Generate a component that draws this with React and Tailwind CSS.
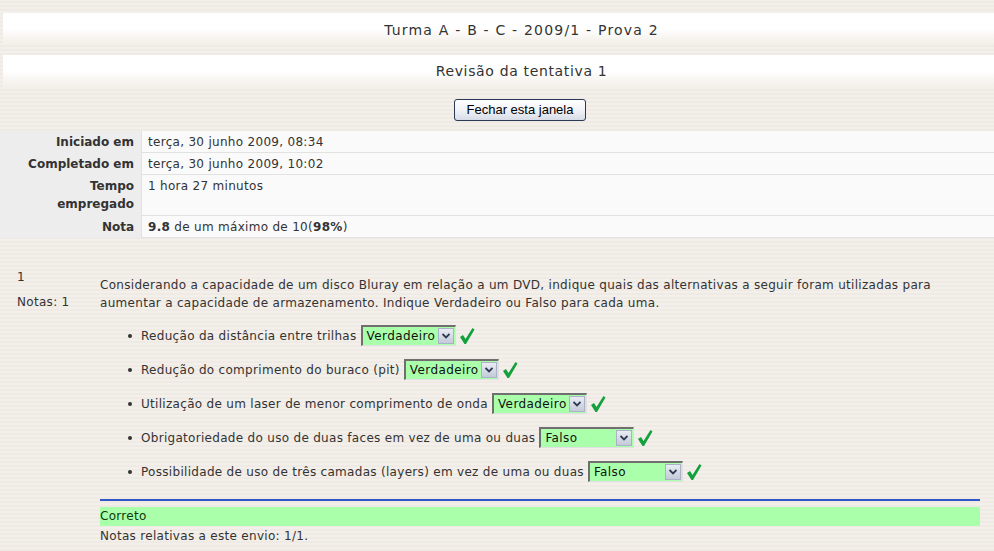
import React from "react";

const font = { fontFamily: '"DejaVu Sans", Verdana, sans-serif' };

const items = [
  { text: "Redução da distância entre trilhas", value: "Verdadeiro" },
  { text: "Redução do comprimento do buraco (pit)", value: "Verdadeiro" },
  { text: "Utilização de um laser de menor comprimento de onda", value: "Verdadeiro" },
  { text: "Obrigatoriedade do uso de duas faces em vez de uma ou duas", value: "Falso" },
  { text: "Possibilidade de uso de três camadas (layers) em vez de uma ou duas", value: "Falso" },
];

const Check = () => (
  <svg width="16" height="18" viewBox="0 0 16 18" className="ml-[3px]">
    <path d="M1 10 L4 8 L6.5 12 L13.5 1 L15.5 2.5 L7 17 L5.5 17 Z" fill="#14a03c" />
  </svg>
);

const FakeSelect = ({ value }) => (
  <div className="flex h-[21px] w-[95px] items-center justify-between border-t-2 border-l-2 border-t-[#6f6f6f] border-l-[#6f6f6f] border-r border-b border-r-[#e0e0e0] border-b-[#e0e0e0] bg-[#aaffaa] pl-[4px] pr-[1px]">
    <span className="text-[12px] leading-none tracking-[0.4px] text-[#111]">{value}</span>
    <span className="flex h-[16px] w-[16px] items-center justify-center border border-[#a9b2c6] bg-gradient-to-b from-[#e9ecf3] to-[#c4cad8]">
      <svg width="8" height="6" viewBox="0 0 8 6">
        <path d="M0.5 1 L4 4.5 L7.5 1" stroke="#2d3950" strokeWidth="1.8" fill="none" />
      </svg>
    </span>
  </div>
);

const Row = ({ label, children, tall }) => (
  <div className="contents">
    <div className={`flex justify-end bg-[#ededed] pt-[2px] pr-[7px] text-right font-bold leading-[18px] tracking-normal text-[#333] ${tall ? "pb-[3px]" : "pb-[1px]"}`}>
      <span className={tall ? "w-[80px]" : ""}>{label}</span>
    </div>
    <div className="border-b border-l border-[#e2e2e2] bg-[#fafafa] px-[6px] pt-[2px] pb-[1px] leading-[18px] text-[#333]">
      {children}
    </div>
  </div>
);

export default function App() {
  return (
    <div
      className="min-h-[551px] w-full overflow-hidden bg-[repeating-linear-gradient(0deg,#efeae4_0px,#efeae4_2px,#f3efea_2px,#f3efea_4px)] pt-[13px] text-[12px] tracking-[0.3px] text-[#333]"
      style={font}
    >
      <div className="w-[1040px]">
        <div className="ml-[3px] flex h-[31px] items-center justify-center bg-gradient-to-b from-white via-white to-[#f3efe9] pt-[3px] text-[14px] tracking-[1.2px] text-[#333]">
          Turma A - B - C - 2009/1 - Prova 2
        </div>
        <div className="ml-[3px] mt-[11px] flex h-[32px] items-center justify-center bg-gradient-to-b from-white via-white to-[#f3efe9] text-[14px] tracking-[0.65px] text-[#333]">
          Revisão da tentativa 1
        </div>
        <div className="mt-[12px] flex justify-center">
          <button
            className="h-[22px] w-[132px] rounded-[3px] border border-[#2a3a55] bg-gradient-to-b from-white via-[#f2f3f7] to-[#d6dbe6] text-[13px] tracking-normal text-black"
            style={{ fontFamily: '"Liberation Sans", Tahoma, sans-serif' }}
          >
            Fechar esta janela
          </button>
        </div>

        <div className="mt-[10px] grid grid-cols-[141px_1fr]">
          <Row label="Iniciado em">terça, 30 junho 2009, 08:34</Row>
          <Row label="Completado em">terça, 30 junho 2009, 10:02</Row>
          <Row label="Tempo empregado" tall>1 hora 27 minutos</Row>
          <Row label="Nota">
            <b>9.8</b> de um máximo de 10(<b>98%</b>)
          </Row>
        </div>
      </div>

      <div className="mt-[30px] flex">
        <div className="w-[100px] pl-[17px] leading-[18px]">
          <div>1</div>
          <div className="mt-[7px]">Notas: 1</div>
        </div>
        <div className="w-[880px] pt-[8px]">
          <p className="leading-[18px]">
            Considerando a capacidade de um disco Bluray em relação a um DVD, indique quais das alternativas a seguir foram utilizadas para aumentar a capacidade de armazenamento. Indique Verdadeiro ou Falso para cada uma.
          </p>
          <ul className="mt-[13px] flex flex-col gap-[13px] pl-[28px]">
            {items.map((it) => (
              <li key={it.text} className="flex items-center">
                <span className="mr-[9px] inline-block h-[4px] w-[4px] rounded-full bg-[#333]" />
                <span className="mr-[4px]">{it.text}</span>
                <FakeSelect value={it.value} />
                <Check />
              </li>
            ))}
          </ul>
          <div className="mt-[17px] h-[2px] bg-[#2f57c8]" />
          <div className="mt-[6px] h-[19px] bg-[#aaffaa] leading-[19px] text-[#0c3a0c]">Correto</div>
          <div className="mt-[1px] leading-[18px]">Notas relativas a este envio: 1/1.</div>
        </div>
      </div>
    </div>
  );
}
